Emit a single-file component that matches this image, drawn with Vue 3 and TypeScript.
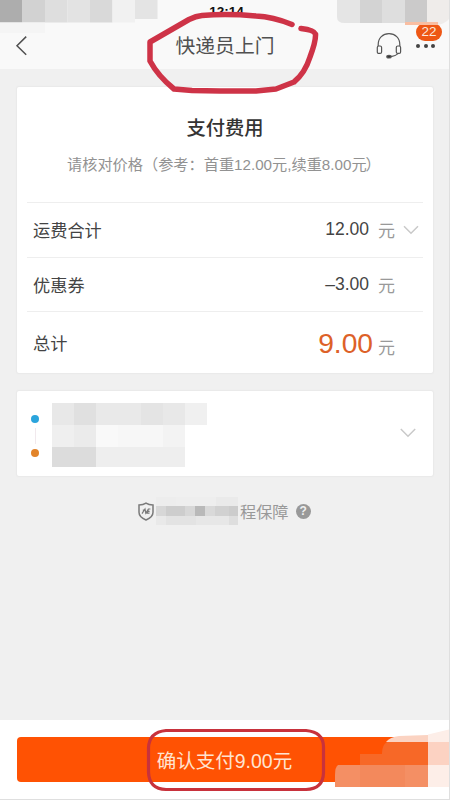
<script setup lang="ts">
type Tile = [x: number, y: number, w: number, h: number, fill: string]

interface FeeRow {
  label: string
  amount: string
  expandable?: boolean
  total?: boolean
}

const rows: FeeRow[] = [
  { label: '运费合计', amount: '12.00', expandable: true },
  { label: '优惠券', amount: '–3.00' },
  { label: '总计', amount: '9.00', total: true },
]

const statusTiles: Tile[] = [
  [0, 0, 22.5, 22.5, '#adadad'],
  [22.5, 0, 22.5, 22.5, '#d2d2d2'],
  [45, 0, 22.5, 22.5, '#dedede'],
  [67.5, 0, 22.5, 22.5, '#e3e3e3'],
  [90, 0, 22.5, 22.5, '#d9d9d9'],
  [112.5, 0, 22.5, 22.5, '#f1f1f1'],
  [135, 0, 22.5, 19, '#e4e4e4'],
  [0, 22.5, 45, 10.5, '#f5f5f5'],
]

const cornerTiles: Tile[] = [
  [337, 0, 23, 23, '#e5e5e5'],
  [360, 0, 22, 23, '#d3d3d3'],
  [382, 0, 23, 23, '#dedede'],
  [405, 0, 22, 25, '#cbcaca'],
  [427, 0, 23, 25, '#efecea'],
  [405, 22, 33, 3, '#f9bea2'],
]

const addressTiles: Tile[] = [
  [0, 0, 22, 22, '#e8e8e8'],
  [22, 0, 22, 22, '#e0e0e0'],
  [44, 0, 45, 22, '#e9e9e9'],
  [89, 0, 22, 22, '#e4e4e4'],
  [111, 0, 22, 22, '#e8e8e8'],
  [133, 0, 22, 22, '#f0f0f0'],
  [0, 22, 22, 22, '#efefef'],
  [22, 22, 22, 22, '#ebebeb'],
  [44, 22, 22, 22, '#f9f9f9'],
  [66, 22, 45, 22, '#f7f7f7'],
  [111, 22, 22, 22, '#f3f3f3'],
  [0, 44, 44, 20, '#dcdcdc'],
  [44, 44, 89, 20, '#eeeeee'],
]

const serviceTiles: Tile[] = [
  [0, 0, 20, 9, '#ededed'],
  [20, 0, 40, 9, '#eeeeee'],
  [60, 0, 22, 9, '#eaeaea'],
  [0, 9, 10, 10, '#d7d7d7'],
  [10, 9, 19, 10, '#cdcdcd'],
  [29, 9, 10, 10, '#d7d7d7'],
  [39, 9, 10, 10, '#b9b9b9'],
  [49, 9, 10, 10, '#d9d9d9'],
  [59, 9, 14, 10, '#d1d1d1'],
  [73, 9, 9, 10, '#cccccc'],
  [0, 19, 10, 9, '#e9e9e9'],
  [10, 19, 30, 9, '#e3e3e3'],
  [40, 19, 33, 9, '#e7e7e7'],
  [73, 19, 9, 9, '#dedede'],
]
</script>

<template>
  <div class="screen">
    <header class="header">
      <div class="status"><span class="clock">12:14</span></div>
      <div class="nav">
        <svg class="back" width="14" height="22" viewBox="0 0 14 22">
          <path d="M11.2 1.6 2 10.8l9.2 9" />
        </svg>
        <h1>快递员上门</h1>
        <div class="actions">
          <svg class="headset" width="28" height="28" viewBox="0 0 28 28">
            <path d="M3.2 14V12.5C3.2 6 7.8 1.6 14 1.6S24.8 6 24.8 12.5V14" />
            <rect x="2.3" y="14" width="4.3" height="7.4" rx="1.5" />
            <rect x="21.3" y="14" width="4.3" height="7.4" rx="1.5" />
            <path d="M23.5 21.4c-1.6 1.4-4 2.6-7.4 3.2" />
            <ellipse class="mic" cx="14" cy="24.7" rx="2.2" ry="1.3" />
          </svg>
          <div class="more">
            <i></i><i></i><i></i>
            <span class="badge">22</span>
          </div>
        </div>
      </div>
    </header>

    <main class="content">
      <section class="card fees">
        <h2>支付费用</h2>
        <p class="hint">请核对价格（参考：首重12.00元,续重8.00元<span class="close">）</span></p>
        <div v-for="row in rows" :key="row.label" class="row" :class="{ total: row.total }">
          <span class="label">{{ row.label }}</span>
          <span class="amount">{{ row.amount }}</span>
          <span class="unit">元</span>
          <span class="toggle">
            <svg v-if="row.expandable" width="16" height="10" viewBox="0 0 16 10">
              <path d="M1 1.2 8 8.2l7-7" />
            </svg>
          </span>
        </div>
      </section>

      <section class="card address">
        <div class="route"><i class="from"></i><b></b><i class="to"></i></div>
        <svg class="mosaic" width="155" height="64">
          <rect v-for="(t, i) in addressTiles" :key="i" :x="t[0]" :y="t[1]" :width="t[2]" :height="t[3]" :fill="t[4]" />
        </svg>
        <svg class="chevron" width="16" height="10" viewBox="0 0 16 10">
          <path d="M.8 1 8 8.2 15.2 1" />
        </svg>
      </section>

      <div class="service">
        <svg class="shield" width="16" height="19" viewBox="0 0 16 19">
          <path d="M8 1.2C6 2.6 3.6 3.1 1 3.1v7.2c0 4 3 6.1 7 7.7 4-1.6 7-3.7 7-7.7V3.1c-2.6 0-5-.5-7-1.9Z" />
          <path class="mark" d="M4 11.6 7 7l.8 4.2L10.4 7M9.2 9.3h2.4M12.4 7h-2l-1.3 4.1h2.4M4.8 8.2h2.4" />
        </svg>
        <svg class="mosaic" width="82" height="28">
          <rect v-for="(t, i) in serviceTiles" :key="i" :x="t[0]" :y="t[1]" :width="t[2]" :height="t[3]" :fill="t[4]" />
        </svg>
        <span>程保障</span>
        <em>?</em>
      </div>
    </main>

    <footer class="footer">
      <button type="button">确认支付9.00元</button>
    </footer>

    <svg class="overlay" width="450" height="800" viewBox="0 0 450 800">
      <rect v-for="(t, i) in statusTiles" :key="'s' + i" :x="t[0]" :y="t[1]" :width="t[2]" :height="t[3]" :fill="t[4]" />
      <clipPath id="corner">
        <path d="M337 0h113v18q-5 6-13 7h-34l-5-2h-53q-8 0-8-6Z" />
      </clipPath>
      <g clip-path="url(#corner)">
        <rect v-for="(t, i) in cornerTiles" :key="'c' + i" :x="t[0]" :y="t[1]" :width="t[2]" :height="t[3]" :fill="t[4]" />
      </g>

      <path class="smudge-mid" d="M360 754h22v-1q0-8 5-11h41v23h-68Z" />
      <path class="smudge-top" d="M386 742q4-5 13-6l29-1v7Z" />
      <path class="smudge-side" d="M428 734.500l21-5V787h-21Z" />
      <path class="smudge-side-mid" d="M428 742h21v23h-21Z" />
      <path class="smudge-low" d="M338 765h90v22h-93v-12q0-8 3-10Z" />
      <path class="smudge-low-right" d="M360 765h45v22h-45Z" />

      <path class="ink" d="M292 24.500C281 20 269 16.500 256 16 239 14.500 220 14 202 15.500Q196 16 189 19.500L150 42V61Q158 76 174 89L192 90.500 220 91H256L276 89 294 82Q305 73 310 57 316 41 315.500 34 314 30 301 28.500" />
      <path class="ink-frame" d="M166 730.500H306Q323.500 732 323.500 747V773Q323 789 306 789.500H166Q149 789 148.500 772V748Q149 732 166 730.500Z" />
      <path class="frame-edge" d="M449.500 0V800M0 799.500H450" />
    </svg>
  </div>
</template>

<style>
body {
  margin: 0;
}
</style>

<style scoped>
.screen {
  position: relative;
  display: flex;
  flex-direction: column;
  width: 450px;
  height: 800px;
  overflow: hidden;
  background: #f0f0f0;
  color: #444;
  font-family: "Liberation Sans", "Noto Sans CJK SC", sans-serif;
}
h1, h2, p { margin: 0; }
svg { display: block; fill: none; }
.header {
  height: 69px;
  background: #f9f9f9;
}
.status {
  display: flex;
  justify-content: center;
  height: 23px;
  padding-left: 3px;
}
.clock {
  margin-top: 4px;
  color: #111;
  font-size: 13.5px;
  line-height: 16px;
  font-weight: 700;
}
.nav {
  display: grid;
  grid-template-columns: 100px 1fr 100px;
  align-items: center;
  height: 46px;
}
.back {
  margin-left: 15px;
  stroke: #505050;
  stroke-width: 1.5;
}
h1 {
  color: #505050;
  font-size: 19.8px;
  font-weight: 400;
  line-height: 28px;
  text-align: center;
}
.actions {
  display: flex;
  align-items: center;
  gap: 13px;
  padding-left: 25px;
}
.headset {
  stroke: #555;
  stroke-width: 1.2;
}
.mic { fill: #333; }
.more {
  position: relative;
  display: flex;
  gap: 3.500px;
}
.more i {
  width: 4px;
  height: 4px;
  border-radius: 50%;
  background: #444;
}
.badge {
  position: absolute;
  left: 0;
  top: -21px;
  width: 26px;
  height: 18px;
  border-radius: 9px;
  background: #ee5715;
  color: #fbe8df;
  font-size: 13.5px;
  line-height: 18px;
  text-align: center;
}
.content {
  flex: 1;
  padding: 18px 17px 0;
}
.card {
  border-radius: 2px;
  background: #fff;
  box-shadow: 0 0 1px 1px #e9e9e9;
}
.fees {
  height: 286px;
  padding: 0 10px;
  box-sizing: border-box;
}
h2 {
  padding-top: 28px;
  color: #333;
  font-size: 19.3px;
  font-weight: 500;
  line-height: 28px;
  text-align: center;
}
.hint {
  height: 59px;
  padding-left: 40px;
  color: #929292;
  font-size: 15.2px;
  line-height: 43px;
  white-space: nowrap;
}
.hint .close { margin-left: -1px; }
.row {
  display: flex;
  align-items: center;
  height: 54.500px;
  padding-left: 6px;
  box-sizing: border-box;
  border-top: 1px solid #eee;
}
.label {
  flex: 1;
  font-size: 17.2px;
}
.amount {
  font-size: 17.5px;
}
.unit {
  margin-left: 9px;
  color: #999;
  font-size: 17px;
}
.toggle {
  width: 28px;
  padding-left: 8px;
  box-sizing: border-box;
}
.toggle svg, .chevron {
  stroke: #c9c9c9;
  stroke-width: 1.5;
}
.total { height: 61px; }
.total .amount {
  margin-top: 2px;
  color: #dd6128;
  font-size: 28.200px;
}
.total .unit {
  margin: 8px 0 0 5px;
}
.address {
  display: flex;
  align-items: center;
  height: 85px;
  margin-top: 18px;
  padding: 0 17px 0 14px;
}
.route {
  display: flex;
  flex-direction: column;
  align-items: center;
  gap: 5px;
  margin-right: 13px;
  margin-top: 4px;
}
.route i {
  width: 8px;
  height: 8px;
  border-radius: 50%;
}
.route b {
  width: 1px;
  height: 16px;
  background: #f1e9ed;
}
.route .from { background: #2aa4dc; }
.route .to { background: #e2842a; }
.address .mosaic { margin-top: 3px; }
.address .chevron {
  margin: -2px 0 0 auto;
}
.service {
  display: flex;
  align-items: center;
  height: 28px;
  margin: 21px 0 0 121px;
  color: #999;
  font-size: 16.2px;
}
.shield {
  margin-right: 2px;
  stroke: #7a7a7a;
  stroke-width: 1.5;
}
.shield .mark { stroke-width: 1.2; }
.service span { margin-left: 2px; }
.service em {
  width: 15px;
  height: 15px;
  margin-left: 7px;
  border-radius: 50%;
  background: #999;
  color: #f0f0f0;
  font-size: 12px;
  font-style: normal;
  font-weight: 700;
  line-height: 15px;
  text-align: center;
}
.footer {
  height: 80px;
  padding: 17px 22px 0 17px;
  box-sizing: border-box;
  background: #fff;
}
button {
  display: block;
  width: 100%;
  height: 45px;
  padding: 1px 0 0 4px;
  border: 0;
  border-radius: 4px;
  background: #ff5203;
  color: #ffe4d0;
  font: 19.5px/46px "Liberation Sans", "Noto Sans CJK SC", sans-serif;
}
.overlay {
  position: absolute;
  inset: 0;
  pointer-events: none;
}
.smudge-mid { fill: #f76827; }
.smudge-top { fill: #fbd3c2; }
.smudge-side { fill: #fdeee8; }
.smudge-side-mid { fill: #fcd2c2; }
.smudge-low { fill: #f48f64; }
.smudge-low-right { fill: #f3895c; }
.ink {
  stroke: #ce3347;
  stroke-width: 5.5;
  stroke-linecap: round;
  stroke-linejoin: round;
}
.ink-frame {
  stroke: #c8323c;
  stroke-width: 3.2;
}
.frame-edge { stroke: #dfdfdf; }
</style>
